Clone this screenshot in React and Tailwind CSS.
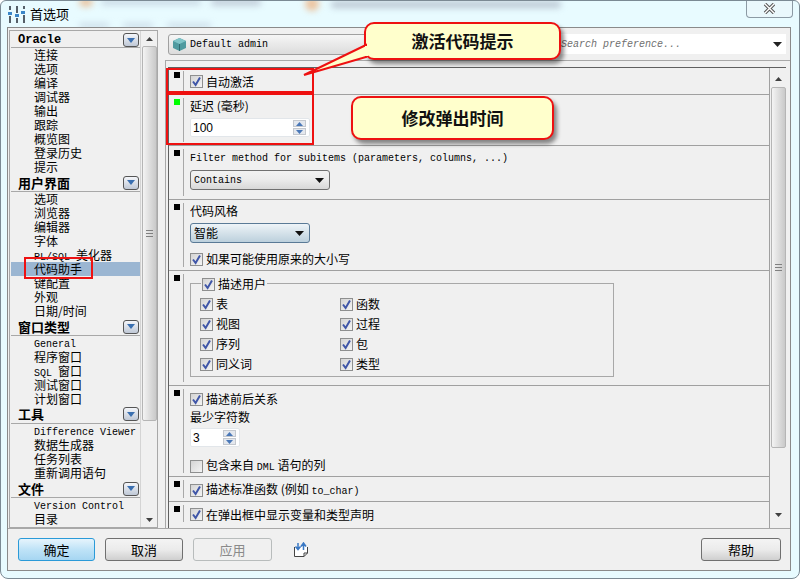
import React from "react";

const mono = "font-['Liberation_Mono','Noto_Sans_CJK_SC',monospace] text-[10px]";

function Cb({ on = true }) {
  return (
    <span className="w-[13px] h-[13px] shrink-0 border border-[#8e8f8f] bg-gradient-to-br from-[#d4d4d4] to-[#f4f4f4] flex items-center justify-center">
      {on && (
        <svg width="11" height="11" viewBox="0 0 11 11">
          <path d="M2 5.5 L4.6 9 L9 1.5" fill="none" stroke="#3f56a8" strokeWidth="2" />
        </svg>
      )}
    </span>
  );
}

function Check({ children, on = true, className = "" }) {
  return (
    <div className={`flex items-center gap-[3px] h-[14px] leading-[14px] ${className}`}>
      <Cb on={on} />
      <span>{children}</span>
    </div>
  );
}

function Arrow({ color = "#555" }) {
  return (
    <svg width="9" height="5" viewBox="0 0 9 5">
      <path d="M0 0 L9 0 L4.5 5 Z" fill={color} />
    </svg>
  );
}

function Scrollbar({ thumbTop, thumbH, bottomPad, className = "" }) {
  return (
    <div className={`flex flex-col items-center bg-[#f0f0f0] ${className}`}>
      <div className="h-[15px] flex items-center justify-center shrink-0">
        <svg width="7" height="4" viewBox="0 0 7 4"><path d="M3.5 0 L7 4 L0 4 Z" fill="#404040" /></svg>
      </div>
      <div className={`w-full flex-1 min-h-0 flex flex-col ${thumbTop}`}>
        <div className={`w-[15px] mx-auto ${thumbH} rounded-[2px] border border-[#b5b5b5] bg-gradient-to-r from-[#f4f4f4] via-[#dedede] to-[#c9c9c9] flex flex-col items-center justify-center`}>
          <div className="w-[7px] h-[7px] border-y border-[#808080] flex items-center"><div className="w-full h-px bg-[#808080]" /></div>
        </div>
      </div>
      <div className={`h-[15px] flex items-center justify-center shrink-0 ${bottomPad}`}>
        <svg width="7" height="4" viewBox="0 0 7 4"><path d="M0 0 L7 0 L3.5 4 Z" fill="#404040" /></svg>
      </div>
    </div>
  );
}

function Header({ children, latin, h = "h-[18px]", extra = "" }) {
  return (
    <div className={`${h} ${extra} flex items-center justify-between pl-[7px] pr-[1px] border-b border-[#a8a8a8] bg-[#f0f0f0]`}>
      <span className={latin ? "font-['Liberation_Mono',monospace] text-[12px] font-bold" : "text-[13px] font-bold"}>{children}</span>
      <span className="w-[16px] h-[14px] rounded-[3px] border border-[#555] bg-gradient-to-b from-[#f4f6fa] to-[#bfc8d6] flex items-center justify-center">
        <svg width="8" height="5" viewBox="0 0 8 5"><path d="M0 0 L8 0 L4 5 Z" fill="#3a6fb0" /></svg>
      </span>
    </div>
  );
}

function Item({ children, latin, selected }) {
  return (
    <div className={`h-[14px] leading-[14px] pl-[23px] whitespace-nowrap ${selected ? "bg-[#9bb6d2]" : ""} ${latin ? `${mono} pt-[2px]` : ""}`}>
      {children}
    </div>
  );
}

function Row({ h, green, last, children }) {
  return (
    <div className={`${h} flex shrink-0 ${last ? "" : "border-b border-[#a0a0a0]"}`}>
      <div className="w-[14px] pl-[5px] pt-[4px] shrink-0">
        <div className={`w-[6px] h-[6px] ${green ? "bg-[#00ff00]" : "bg-black"}`} />
      </div>
      <div className="border-l border-[#a8a8a8] my-[3px] pl-[6px] flex-1 min-w-0">{children}</div>
    </div>
  );
}

function Combo({ w, blue, children, cls = "" }) {
  return (
    <div className={`${w} h-[20px] rounded-[3px] border flex items-center justify-between pl-[3px] pr-[5px] ${blue ? "border-[#5a7a96] bg-gradient-to-b from-[#eef4f8] to-[#bcd0dc]" : "border-[#707070] bg-gradient-to-b from-[#f2f2f2] via-[#ebebeb] to-[#d8d8d8]"} ${cls}`}>
      <span>{children}</span>
      <Arrow color="#111" />
    </div>
  );
}

function Spin({ w, children }) {
  return (
    <div className={`${w} h-[19px] bg-white border border-[#e2e6ea] rounded-[2px] flex items-center justify-between pl-[2px] pr-[3px]`}>
      <span className="text-[12px] font-['Liberation_Sans',sans-serif]">{children}</span>
      <div className="w-[13px] h-[15px] flex flex-col gap-px">
        <div className="flex-1 bg-[#e4e8ee] border border-[#c4c8ce] flex items-center justify-center"><svg width="7" height="4" viewBox="0 0 7 4"><path d="M3.5 0 L7 4 L0 4 Z" fill="#4a78b8" /></svg></div>
        <div className="flex-1 bg-[#e4e8ee] border border-[#c4c8ce] flex items-center justify-center"><svg width="7" height="4" viewBox="0 0 7 4"><path d="M0 0 L7 0 L3.5 4 Z" fill="#4a78b8" /></svg></div>
      </div>
    </div>
  );
}

function Btn({ w, primary, disabled, children }) {
  const skin = primary
    ? "border-[#2a9ad8] bg-gradient-to-b from-[#e6f4fc] via-[#bfe3f7] to-[#a6d6f2] text-black"
    : disabled
    ? "border-[#b8bcbc] bg-[#f0f0f0] text-[#8a8a8a]"
    : "border-[#707070] bg-gradient-to-b from-[#f4f4f4] via-[#ebebeb] to-[#cfcfcf] text-black";
  return (
    <button className={`${w} h-[23px] rounded-[3px] border text-[13px] leading-none ${skin}`}>{children}</button>
  );
}

function Callout({ pos, children }) {
  return (
    <div className={`absolute ${pos} rounded-[10px] border-2 border-[#ee1111] bg-[#ffffcc] flex items-center justify-center text-[17px] font-bold text-[#111] shadow-[3px_4px_4px_rgba(0,0,0,0.45)]`}>
      {children}
    </div>
  );
}

function Blur({ pos }) {
  return <div className={`absolute ${pos} rounded-full blur-[3px]`} />;
}

export default function App() {
  return (
    <div className="relative w-[801px] h-[579px] overflow-hidden bg-white text-[12px] text-black font-['Noto_Sans_CJK_SC','Liberation_Sans',sans-serif]">
      <div className="relative h-full mr-[1px] rounded-b-[8px] rounded-t-[6px] border border-[#7b8a94] bg-[#e8fbff] pl-[6px] pr-[8px] pb-[7px] flex flex-col overflow-hidden">
        {/* blurred desktop behind the glass */}
        <Blur pos="left-[78px] top-[-4px] w-[14px] h-[10px] bg-[#e8c8a8]" />
        <Blur pos="left-[100px] top-[-2px] w-[100px] h-[6px] bg-[#c8d8e4]" />
        <Blur pos="left-[210px] top-[-3px] w-[50px] h-[8px] bg-[#c4d0dc]" />
        <Blur pos="left-[304px] top-[-4px] w-[14px] h-[14px] bg-[#ecc4a0]" />
        <Blur pos="left-[330px] top-[0px] w-[230px] h-[7px] bg-[#bcc8d4]" />
        <Blur pos="left-[78px] top-[22px] w-[30px] h-[5px] bg-[#ccdce8]" />
        <Blur pos="left-[122px] top-[22px] w-[30px] h-[5px] bg-[#ccdce8]" />
        <Blur pos="left-[166px] top-[22px] w-[44px] h-[5px] bg-[#ccdce8]" />

        {/* title bar */}
        <div className="h-[26px] shrink-0 flex items-center relative">
          <svg width="17" height="17" viewBox="0 0 17 17" className="ml-[1px] mr-[5px]">
            <g fill="#555f68">
              <rect x="1" y="0" width="2" height="4" /><rect x="1" y="10" width="2" height="7" />
              <rect x="8" y="0" width="2" height="7" /><rect x="8" y="12" width="2" height="5" />
              <rect x="15" y="0" width="2" height="3" /><rect x="15" y="9" width="2" height="8" />
            </g>
            <g fill="#3a86c8">
              <rect x="0" y="6" width="4" height="3" /><rect x="7" y="8" width="4" height="3" /><rect x="13" y="5" width="4" height="3" />
            </g>
          </svg>
          <span className="text-[13px]">首选项</span>
          <div className="absolute right-[-2px] top-[-1px] w-[47px] h-[18px] rounded-b-[4px] border border-t-0 border-[#8c9aa4] bg-[#eaf8fc] flex items-center justify-center">
            <svg width="13" height="11" viewBox="0 0 13 11">
              <path d="M2 1 L11 10 M11 1 L2 10" stroke="#555" strokeWidth="3.4" fill="none" />
              <path d="M2 1 L11 10 M11 1 L2 10" stroke="#fff" strokeWidth="1.4" fill="none" />
            </svg>
          </div>
        </div>

        {/* client */}
        <div className="relative flex-1 min-h-0 border border-[#8a8a8a] bg-[#f0f0f0] flex flex-col">
          <div className="h-[500px] shrink-0 flex pt-[1px]">
            {/* left list */}
            <div className="w-[149px] ml-[1px] mt-[1px] h-[498px] border border-[#a8a8a8] flex shrink-0 overflow-hidden">
              <div className="w-[131px] shrink-0 pl-[1px] pt-[2px] overflow-hidden border-r border-[#d4d4d4]">
                <Header latin h="h-[15px]">Oracle</Header>
                {["连接", "选项", "编译", "调试器", "输出", "跟踪", "概览图", "登录历史", "提示"].map((t) => <Item key={t}>{t}</Item>)}
                <Header>用户界面</Header>
                {["选项", "浏览器", "编辑器", "字体"].map((t) => <Item key={t}>{t}</Item>)}
                <Item><span className={mono}>PL/SQL </span>美化器</Item>
                <Item selected>代码助手</Item>
                {["键配置", "外观", "日期/时间"].map((t) => <Item key={t}>{t}</Item>)}
                <Header>窗口类型</Header>
                <Item latin>General</Item>
                <Item>程序窗口</Item>
                <Item><span className={mono}>SQL </span>窗口</Item>
                <Item>测试窗口</Item>
                <Item>计划窗口</Item>
                <Header extra="pb-[1px]">工具</Header>
                <Item latin>Difference Viewer</Item>
                {["数据生成器", "任务列表", "重新调用语句"].map((t) => <Item key={t}>{t}</Item>)}
                <Header>文件</Header>
                <Item latin>Version Control</Item>
                <Item>目录</Item>
                <Item>比较器</Item>
              </div>
              <Scrollbar thumbTop="" thumbH="h-[375px]" bottomPad="" className="flex-1 min-w-0" />
            </div>

            {/* right */}
            <div className="flex-1 min-w-0 pl-[7px] flex flex-col">
              <div className="h-[31px] shrink-0 pt-[5px] pl-[3px] pr-[4px] flex justify-between">
                <div className="w-[200px] h-[21px] rounded-[3px] border border-[#a0a0a0] bg-gradient-to-b from-[#f6f6f6] to-[#dcdcdc] flex items-center pl-[3px] gap-[3px]">
                  <svg width="15" height="15" viewBox="0 0 15 15">
                    <path d="M7.5 1 L14 4 V11 L7.5 14 L1 11 V4 Z" fill="#4f9aa0" />
                    <path d="M1 4 L7.5 7 L14 4 L7.5 1 Z" fill="#7fc4c8" />
                    <path d="M7.5 7 V14" stroke="#2f6a70" strokeWidth="1" />
                  </svg>
                  <span className={mono}>Default admin</span>
                </div>
                <div className="w-[226px] h-[20px] bg-white flex items-center justify-between pl-[1px] pr-[4px]">
                  <span className={`${mono} italic text-[#707070]`}>Search preference...</span>
                  <Arrow color="#222" />
                </div>
              </div>
              <div className="border-t border-[#a8a8a8] h-[469px] border-l pl-[2px] pt-[6px] pr-[4px]">
                <div className="h-[462px] border-t border-[#606060] border-l flex overflow-hidden">
                  <div className="flex-1 min-w-0 flex flex-col border-r border-[#a0a0a0] overflow-hidden">
                    <Row h="h-[27px]">
                      <Check className="pt-[7px]">自动激活</Check>
                    </Row>
                    <Row h="h-[51px]" green>
                      <div className="h-[14px] leading-[14px] mt-[1px] mb-[5px]">延迟 (毫秒)</div>
                      <Spin w="w-[120px]">100</Spin>
                    </Row>
                    <Row h="h-[54px]">
                      <div className={`${mono} h-[14px] leading-[14px] mt-[3px] mb-[4px]`}>Filter method for subitems (parameters, columns, ...)</div>
                      <Combo w="w-[140px]" cls={mono}>Contains</Combo>
                    </Row>
                    <Row h="h-[71px]">
                      <div className="h-[14px] leading-[14px] mt-[1px] mb-[5px]">代码风格</div>
                      <Combo w="w-[120px]" blue>智能</Combo>
                      <Check className="mt-[9px]">如果可能使用原来的大小写</Check>
                    </Row>
                    <Row h="h-[115px]">
                      <div className="relative w-[424px] h-[94px] mt-[9px] border border-[#a8a8a8] pt-[13px] pl-[9px]">
                        <Check className="absolute left-[10px] top-[-7px] bg-[#f0f0f0] px-px">描述用户</Check>
                        <div className="grid grid-cols-[140px_100px] gap-y-[6px]">
                          {["表", "函数", "视图", "过程", "序列", "包", "同义词", "类型"].map((t) => <Check key={t}>{t}</Check>)}
                        </div>
                      </div>
                    </Row>
                    <Row h="h-[91px]">
                      <Check className="mt-[3px]">描述前后关系</Check>
                      <div className="h-[14px] leading-[14px] mt-[4px] mb-[4px]">最少字符数</div>
                      <Spin w="w-[50px]">3</Spin>
                      <Check className="mt-[12px]" on={false}>包含来自 <span className={mono}>DML</span> 语句的列</Check>
                    </Row>
                    <Row h="h-[25px]">
                      <Check className="pt-[6px]">描述标准函数 (例如 <span className={mono}>to_char)</span></Check>
                    </Row>
                    <Row h="h-[23px]" last>
                      <Check className="pt-[5px]">在弹出框中显示变量和类型声明</Check>
                    </Row>
                  </div>
                  <Scrollbar thumbTop="pt-[1px]" thumbH="h-[361px]" bottomPad="mb-[7px]" className="w-[16px] shrink-0 pt-[3px]" />
                </div>
              </div>
            </div>
          </div>

          {/* buttons */}
          <div className="flex-1 min-h-0 border-t border-[#a8a8a8] pl-[10px] pr-[9px] flex items-center gap-[10px]">
            <Btn w="w-[77px]" primary>确定</Btn>
            <Btn w="w-[78px]">取消</Btn>
            <Btn w="w-[79px]" disabled>应用</Btn>
            <svg width="16" height="16" viewBox="0 0 16 16" className="ml-[11px]">
              <path d="M1.5 5 V14.5 H11 L14.5 11 V5" fill="#fff" stroke="#444" />
              <path d="M11 14.5 V11 H14.5" fill="none" stroke="#444" />
              <path d="M5 1 V7 M2.5 4.5 L5 7.5 L7.5 4.5 M10.5 8 V2 M8 4.5 L10.5 1 L13 4.5" stroke="#3a78c4" strokeWidth="1.5" fill="none" />
            </svg>
            <div className="flex-1" />
            <Btn w="w-[80px]">帮助</Btn>
          </div>
        </div>
      </div>

      {/* annotations */}
      <div className="absolute left-[24px] top-[257px] w-[69px] h-[22px] border-2 border-[#ee1111]" />
      <div className="absolute left-[166px] top-[68px] w-[148px] h-[25px] border-2 border-[#ee1111]" />
      <div className="absolute left-[166px] top-[93px] w-[148px] h-[52px] border-2 border-[#ee1111]" />
      <Callout pos="left-[364px] top-[22px] w-[197px] h-[38px]">激活代码提示</Callout>
      <Callout pos="left-[351px] top-[96px] w-[203px] h-[44px]">修改弹出时间</Callout>
      <svg width="80" height="40" viewBox="0 0 80 40" className="absolute left-[300px] top-[42px]">
        <path d="M66 3 L4 33 L66 15 Z" fill="#ffffcc" stroke="#ee1111" strokeWidth="2" />
        <path d="M66.5 4 V14" stroke="#ffffcc" strokeWidth="3" />
      </svg>
    </div>
  );
}
